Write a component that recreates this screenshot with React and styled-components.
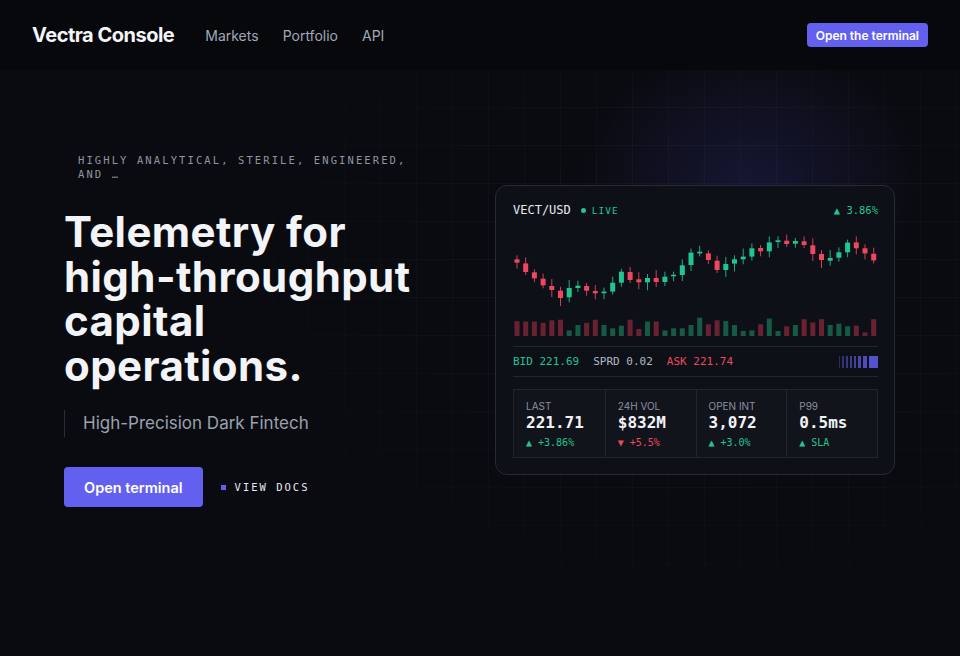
import React from 'react';
import styled, { createGlobalStyle } from 'styled-components';

const GREEN = '#22c58f';
const RED = '#ee4760';
const ACCENT = '#6360f0';
const MONO = `"DejaVu Sans Mono", "Liberation Mono", monospace`;

const GlobalStyle = createGlobalStyle`
    html, body {
        margin : 0;
        padding : 0;
        background : #0a0b10;
        font-family : Inter, "Noto Sans", sans-serif;
        color : #e6e8ee;
    }
    * { box-sizing : border-box; }
`

/* 상단 네비게이션 */
const Nav = styled.nav`
    display : flex;
    align-items : center;
    height : 70px;
    padding : 0 32px;
    background : #07080b;
`
const Brand = styled.div`
    font-size : 20px;
    font-weight : 700;
    letter-spacing : -0.025em;
    color : #f4f5f8;
`
const NavLinks = styled.div`
    display : flex;
    gap : 24px;
    margin-left : 31px;
`
const NavLink = styled.a`
    font-size : 14px;
    color : #a1a8b8;
    text-decoration : none;
`
const NavButton = styled.button`
    margin-left : auto;
    height : 24px;
    padding : 0 9px;
    border : none;
    border-radius : 4px;
    background : ${ACCENT};
    color : #fff;
    font-family : inherit;
    font-size : 12px;
    font-weight : 600;
`

/* 히어로 영역 */
const Hero = styled.section`
    position : relative;
    display : grid;
    grid-template-columns : 1fr 400px;
    align-items : center;
    min-height : calc(100vh - 70px);
    padding : 83px 65px 60px 64px;
    align-content : start;
    overflow : hidden;

    &::before{
        content : '';
        position : absolute;
        inset : 0;
        background-image :
            linear-gradient(rgba(255,255,255,0.03) 1px, transparent 1px),
            linear-gradient(90deg, rgba(255,255,255,0.03) 1px, transparent 1px);
        background-size : 36px 38px;
        background-position : 20px -1px;
        mask-image : radial-gradient(ellipse 560px 420px at 72% 35%, #000 30%, transparent 100%);
        pointer-events : none;
    }
    &::after{
        content : '';
        position : absolute;
        left : 560px;
        top : -40px;
        width : 380px;
        height : 300px;
        background : radial-gradient(ellipse at center, rgba(82,74,220,0.17), transparent 65%);
        pointer-events : none;
    }
`
const Left = styled.div`
    position : relative;
    z-index : 1;
`
const Eyebrow = styled.div`
    max-width : 350px;
    padding-left : 14px;
    font-family : ${MONO};
    font-size : 10.5px;
    line-height : 14px;
    letter-spacing : 2.1px;
    color : #8f95a3;
`
const Title = styled.h1`
    margin : 29px 0 0;
    font-size : 42px;
    line-height : 44.5px;
    font-weight : 700;
    letter-spacing : 0.01em;
    color : #f3f4f7;
`
const Sub = styled.p`
    margin : 22px 0 0;
    height : 27px;
    line-height : 27px;
    padding-left : 18px;
    border-left : 1px solid #2a2d37;
    font-size : 17px;
    color : #9ba1ae;
`
const Actions = styled.div`
    display : flex;
    align-items : center;
    gap : 18px;
    margin-top : 30px;
`
const PrimaryButton = styled.button`
    height : 40px;
    padding : 0 20px;
    border : none;
    border-radius : 4px;
    background : ${ACCENT};
    color : #fff;
    font-family : inherit;
    font-size : 14.5px;
    font-weight : 600;
`
const DocsLink = styled.a`
    display : flex;
    align-items : center;
    gap : 9px;
    font-family : ${MONO};
    font-size : 10.5px;
    letter-spacing : 2px;
    color : #e8eaf0;

    &::before{
        content : '';
        width : 5px;
        height : 5px;
        background : ${ACCENT};
    }
`

/* 시세 카드 */
const Card = styled.div`
    position : relative;
    z-index : 1;
    width : 400px;
    padding : 17px 16px 16px 17px;
    border : 1px solid #262a35;
    border-radius : 12px;
    background : #0e1017;
    font-family : ${MONO};
`
const CardHeader = styled.div`
    display : flex;
    align-items : center;
    height : 14px;
`
const Pair = styled.span`
    font-size : 12px;
    color : #e7e9ef;
`
const Live = styled.span`
    display : flex;
    align-items : center;
    gap : 6px;
    margin-left : 10px;
    font-size : 9.5px;
    letter-spacing : 1px;
    color : ${GREEN};

    &::before{
        content : '';
        width : 5px;
        height : 5px;
        border-radius : 50%;
        background : ${GREEN};
    }
`
const Change = styled.span`
    margin-left : auto;
    font-size : 10.5px;
    color : ${GREEN};
`
const Chart = styled.svg`
    display : block;
    margin-top : ${p => p.$gap || 0}px;
`
const Quote = styled.div`
    display : flex;
    align-items : center;
    gap : 14px;
    height : 31px;
    margin-top : 10px;
    border-top : 1px solid #23262f;
    border-bottom : 1px solid #23262f;
    font-size : 11px;
`
const QuoteItem = styled.span`
    color : ${p => p.$tone === 'up' ? GREEN : p.$tone === 'down' ? RED : '#b4b9c5'};
`
const Depth = styled.div`
    display : flex;
    gap : 2px;
    margin-left : auto;
    height : 12px;
`
const DepthBar = styled.span`
    width : ${p => p.$w}px;
    background : ${ACCENT};
`
const Stats = styled.div`
    display : grid;
    grid-template-columns : repeat(4, 1fr);
    margin-top : 12px;
    border : 1px solid #22252e;
    background : #12141b;
`
const Stat = styled.div`
    padding : 10px 12px 8px;
    & + &{ border-left : 1px solid #22252e; }
`
const StatLabel = styled.div`
    font-family : Inter, sans-serif;
    font-size : 10px;
    line-height : 12px;
    color : #8a90a0;
`
const StatValue = styled.div`
    margin-top : 1px;
    font-size : 16px;
    line-height : 20px;
    font-weight : 700;
    color : #f1f2f6;
`
const StatDelta = styled.div`
    margin-top : 3px;
    font-size : 10px;
    line-height : 13px;
    color : ${p => p.$down ? RED : GREEN};
`

// [body top, body bottom, up?, volume height]
const candles = [
    [35.3,38.7,0,14.9],[39.4,48.0,0,14.4],[48.3,54.3,0,14.4],[54.7,61.3,0,13.1],[62.0,66.0,0,15.7],
    [66.7,74.0,0,16.3],[64.0,73.3,1,5.6],[61.7,64.0,1,11],[62.0,66.7,0,13.1],[67.0,69.3,0,16.3],
    [67.6,69.1,1,11],[58.7,67.6,1,7.7],[47.7,58.7,1,10.3],[48.0,56.0,0,16.3],[55.3,58.3,0,7],
    [54.0,58.3,1,14.4],[54.0,58.0,0,14.4],[52.7,58.0,1,5.6],[50.7,52.3,1,7.7],[41.3,51.0,1,7.7],
    [28.6,41.0,1,11],[27.7,29.4,1,18.3],[29.4,36.0,0,11.7],[36.7,46.0,0,15.7],[40.0,46.0,1,14.9],
    [35.3,39.6,1,11],[32.6,35.3,1,5],[24.3,32.6,1,5.6],[24.0,27.3,0,11.7],[18.4,27.3,1,17.4],
    [16.3,18.0,1,5],[16.7,20.0,0,9.7],[17.0,19.7,1,11],[17.3,21.0,0,16.8],[21.3,30.0,0,13.6],
    [30.0,36.0,0,16.8],[34.0,36.7,1,11],[28.3,33.7,1,12.3],[18.6,28.3,1,9.7],[18.4,24.3,0,10.3],
    [24.3,29.4,0,3.6],[29.7,36.4,0,16.8],
];
const wickUp = [4,6,3,5,7,4,8,5,3,6];
const wickDown = [6,4,7,3,5,8,4,6,5,3];

const CandleChart = () => (
    <Chart width="366" height="92" viewBox="0 0 366 92" $gap={7}>
        {candles.map(([top, bottom, up], i) => {
            const x = 4 + i * 8.7;
            const color = up ? GREEN : RED;
            return (
                <g key={i}>
                    <line x1={x} x2={x} y1={top - wickUp[i % 10]} y2={bottom + wickDown[(i * 3) % 10]}
                        stroke={color} strokeWidth="1" opacity="0.85" />
                    <rect x={x - 2.5} y={top} width="5" height={Math.max(bottom - top, 1.6)} fill={color} />
                </g>
            );
        })}
    </Chart>
);

const VolumeChart = () => (
    <Chart width="366" height="20" viewBox="0 0 366 20">
        {candles.map(([, , up, vol], i) => (
            <rect key={i} x={4 + i * 8.7 - 2.5} y={20 - vol} width="5" height={vol}
                fill={up ? '#165a45' : '#6a2232'} />
        ))}
    </Chart>
);

const depth = [1, 1.5, 2, 2, 2.5, 3, 4, 9];

const stats = [
    { label: 'LAST', value: '221.71', delta: '▲ +3.86%' },
    { label: '24H VOL', value: '$832M', delta: '▼ +5.5%', down: true },
    { label: 'OPEN INT', value: '3,072', delta: '▲ +3.0%' },
    { label: 'P99', value: '0.5ms', delta: '▲ SLA' },
];

const App = () => {
    return (
        <>
            <GlobalStyle />
            <Nav>
                <Brand>Vectra Console</Brand>
                <NavLinks>
                    <NavLink>Markets</NavLink>
                    <NavLink>Portfolio</NavLink>
                    <NavLink>API</NavLink>
                </NavLinks>
                <NavButton>Open the terminal</NavButton>
            </Nav>
            <Hero>
                <Left>
                    <Eyebrow>HIGHLY ANALYTICAL, STERILE, ENGINEERED, AND …</Eyebrow>
                    <Title>Telemetry for<br />high-throughput<br />capital<br />operations.</Title>
                    <Sub>High-Precision Dark Fintech</Sub>
                    <Actions>
                        <PrimaryButton>Open terminal</PrimaryButton>
                        <DocsLink>VIEW DOCS</DocsLink>
                    </Actions>
                </Left>
                <Card>
                    <CardHeader>
                        <Pair>VECT/USD</Pair>
                        <Live>LIVE</Live>
                        <Change>▲ 3.86%</Change>
                    </CardHeader>
                    <CandleChart />
                    <VolumeChart />
                    <Quote>
                        <QuoteItem $tone="up">BID 221.69</QuoteItem>
                        <QuoteItem>SPRD 0.02</QuoteItem>
                        <QuoteItem $tone="down">ASK 221.74</QuoteItem>
                        <Depth>
                            {depth.map((w, i) => (
                                <DepthBar key={i} $w={w} style={{ opacity: 0.35 + i * 0.07 }} />
                            ))}
                        </Depth>
                    </Quote>
                    <Stats>
                        {stats.map(s => (
                            <Stat key={s.label}>
                                <StatLabel>{s.label}</StatLabel>
                                <StatValue>{s.value}</StatValue>
                                <StatDelta $down={s.down}>{s.delta}</StatDelta>
                            </Stat>
                        ))}
                    </Stats>
                </Card>
            </Hero>
        </>
    );
}

export default App;
